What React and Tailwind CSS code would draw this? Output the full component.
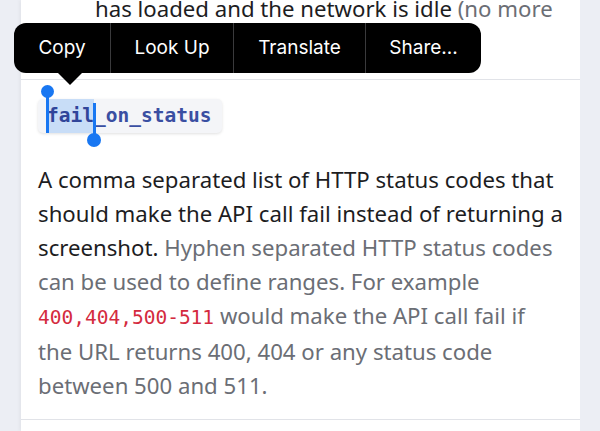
import React from 'react'

const sans = { fontFamily: '"Noto Sans", "Open Sans", sans-serif' }

export default function App() {
  const items = ['Copy', 'Look Up', 'Translate', 'Share...']
  const widths = ['w-[96px]', 'w-[123px]', 'w-[132px]', 'flex-1']

  return (
    <div className="relative w-[600px] h-[431px] overflow-hidden bg-[#eceef4]" style={sans}>
      {/* панель документации */}
      <div className="ml-[21px] flex h-full w-[559px] flex-col bg-white shadow-[-2px_0_3px_rgba(0,0,0,0.04)]">
        <div className="flex h-[80px] shrink-0 flex-col border-b border-[#e1e3e8] pl-[74px]">
          <p className="-mt-[8px] text-[22.2px] leading-[34px] text-[#1d1d1f]">
            has loaded and the network is idle <span className="text-[#6b6e75]">(no more</span>
          </p>
        </div>

        <div className="pl-[17px] pt-[19px]">
          <span className="inline-flex h-[34px] items-center rounded-[5px] bg-[#f4f5f8] pl-[9px] pr-[11px] font-['DejaVu_Sans_Mono',monospace] text-[19.5px] font-bold text-[#3a4fa2] shadow-[0_1px_3px_rgba(0,0,0,0.12)]">
            <span className="flex h-full items-center bg-[#c8ddf7] text-[#30459a]">fail</span>
            _on_status
          </span>
        </div>

        <div className="mt-[30px] border-b border-[#e1e3e8] pl-[17px] pr-[16px] pb-[16px]">
          <p className="text-[22.2px] leading-[34px] text-[#1d1d1f]">
            A comma separated list of HTTP status codes that should make the API call fail instead of returning a screenshot.{' '}
            <span className="text-[#6b6e75]">
              Hyphen separated HTTP status codes can be used to define ranges. For example{' '}
              <code className="font-['DejaVu_Sans_Mono',monospace] text-[19.5px] text-[#d42a3e]">400,404,500-511</code>{' '}
              would make the API call fail if the URL returns 400, 404 or any status code between 500 and 511.
            </span>
          </p>
        </div>
      </div>

      {/* ручки выделения */}
      <div className="absolute left-[46px] top-[91px] h-[42px] w-[2.5px] bg-[#1877f2]" />
      <div className="absolute left-[41px] top-[85px] h-[13px] w-[13px] rounded-full bg-[#1877f2]" />
      <div className="absolute left-[93px] top-[103px] h-[37px] w-[2.5px] bg-[#1877f2]" />
      <div className="absolute left-[87px] top-[133px] h-[14px] w-[14px] rounded-full bg-[#1877f2]" />

      {/* контекстное меню */}
      <div className="absolute left-[14px] top-[23px] flex h-[50px] w-[467px] overflow-hidden rounded-[12px] bg-black font-['Inter',sans-serif] text-[19px] text-white">
        {items.map((label, i) => (
          <div
            key={label}
            className={`${widths[i]} flex items-center justify-center ${i > 0 ? 'border-l border-[#3a3a3c]' : ''}`}
          >
            {label}
          </div>
        ))}
      </div>
      <div className="absolute left-[57px] top-[72px] h-0 w-0 border-l-[13px] border-r-[13px] border-t-[13px] border-l-transparent border-r-transparent border-t-black" />
    </div>
  )
}
